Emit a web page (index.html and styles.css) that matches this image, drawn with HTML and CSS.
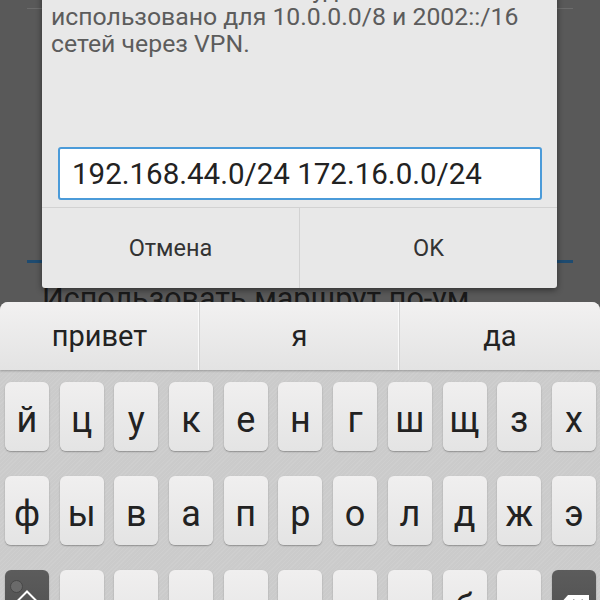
FILE: index.html
```html
<!DOCTYPE html>
<html lang="ru">
<head>
<meta charset="utf-8">
<title>VPN routes</title>
<link rel="stylesheet" href="styles.css">
</head>
<body>
<div class="under">
  <div class="rule"></div>
  <div class="blue"></div>
  <div class="label">Использовать маршрут по-умолчанию</div>
</div>

<div class="dialog">
  <div class="msg">
    <div class="line">"10.0.0.0/8 2002::/16" будет</div>
    <div class="line">использовано для 10.0.0.0/8 и 2002::/16</div>
    <div class="line">сетей через VPN.</div>
  </div>
  <div class="field-wrap">
    <div class="input">192.168.44.0/24 172.16.0.0/24</div>
  </div>
  <div class="buttons">
    <div class="btn">Отмена</div>
    <div class="btn btn-sep">OK</div>
  </div>
</div>

<div class="keyboard">
  <div class="strip">
    <div class="sug">привет</div>
    <div class="sug">я</div>
    <div class="sug sug-last">да</div>
  </div>
  <div class="rows">
    <div class="row">
      <div class="key">й</div><div class="key">ц</div><div class="key">у</div><div class="key">к</div><div class="key">е</div><div class="key">н</div><div class="key">г</div><div class="key">ш</div><div class="key">щ</div><div class="key">з</div><div class="key">х</div>
    </div>
    <div class="row">
      <div class="key">ф</div><div class="key">ы</div><div class="key">в</div><div class="key">а</div><div class="key">п</div><div class="key">р</div><div class="key">о</div><div class="key">л</div><div class="key">д</div><div class="key">ж</div><div class="key">э</div>
    </div>
    <div class="row">
      <div class="key key-dark key-shift">
        <span class="led"></span>
        <svg width="28" height="30" viewBox="0 0 28 30"><polygon points="14,1.5 26,13.5 19,13.5 19,28 9,28 9,13.5 2,13.5" fill="none" stroke="#ffffff" stroke-width="2" stroke-linejoin="miter"/></svg>
      </div>
      <div class="key">я</div><div class="key">ч</div><div class="key">с</div><div class="key">м</div><div class="key">и</div><div class="key">т</div><div class="key">ь</div><div class="key">б</div><div class="key">ю</div>
      <div class="key key-dark key-back">
        <svg width="32" height="22" viewBox="0 0 32 22"><path d="M10 1 H31 V21 H10 L1 11 Z" fill="#ffffff"/><path d="M15 6 L25 16 M25 6 L15 16" stroke="#4e4e4e" stroke-width="2.4"/></svg>
      </div>
    </div>
  </div>
</div>
</body>
</html>
```

FILE: styles.css
```css
html, body {
  margin: 0;
  padding: 0;
}
body {
  width: 600px;
  height: 600px;
  overflow: hidden;
  position: relative;
  background: #595959;
  font-family: Roboto, "Noto Sans", sans-serif;
}

/* dimmed page under the dialog */
.under {
  padding-top: 8px;
}
.rule {
  height: 1px;
  margin: 0 27px;
  background: #6c6c6c;
}
.blue {
  height: 3px;
  margin: 251px 27px 0;
  background: #1e4b70;
}
.label {
  margin-top: 18px;
  margin-left: 42px;
  width: 428px;
  overflow: hidden;
  font-size: 30.5px;
  color: #1a1a1a;
  white-space: nowrap;
}

/* dialog */
.dialog {
  position: absolute;
  left: 42px;
  top: -24px;
  width: 515px;
  background: #e8e8e8;
  border-radius: 0 0 3px 3px;
  box-shadow: 0 2px 6px rgba(0, 0, 0, 0.45);
}
.msg {
  padding: 0 9px;
  font-size: 24.8px;
  line-height: 27px;
  color: #5c5c5c;
  white-space: nowrap;
}
.field-wrap {
  padding: 90px 15px 7px 16px;
}
.input {
  box-sizing: border-box;
  height: 53px;
  border: 2px solid #4b9bd9;
  border-radius: 3px;
  background: #ffffff;
  display: flex;
  align-items: center;
  padding-left: 12px;
  font-size: 29.5px;
  color: #222222;
  white-space: nowrap;
}
.buttons {
  display: flex;
  height: 80px;
  border-top: 1px solid #d2d2d2;
}
.btn {
  flex: 1;
  display: flex;
  align-items: center;
  justify-content: center;
  font-size: 23.5px;
  color: #333333;
}
.btn-sep {
  border-left: 1px solid #d2d2d2;
}

/* keyboard */
.keyboard {
  position: absolute;
  left: 0;
  top: 302px;
  width: 600px;
  bottom: 0;
  border-radius: 8px 8px 0 0;
  overflow: hidden;
  background-color: #cbcbcb;
  background-image: repeating-linear-gradient(135deg, rgba(255,255,255,0.07) 0 1px, transparent 1px 3px);
}
.strip {
  height: 68px;
  display: grid;
  grid-template-columns: 200px 200px 200px;
  background: linear-gradient(#f2f1f1, #e3e3e3);
  box-shadow: 0 1px 2px rgba(0, 0, 0, 0.25);
  position: relative;
}
.sug {
  display: flex;
  align-items: center;
  justify-content: center;
  font-size: 29px;
  color: #222222;
  border-right: 1px solid #d6d6d6;
  box-shadow: inset -2px 0 0 -1px #fafafa;
}
.sug-last {
  border-right: 0;
  box-shadow: none;
}
.rows {
  padding: 12px 4px 0 5px;
  display: flex;
  flex-direction: column;
  gap: 25px;
}
.row {
  display: flex;
  justify-content: space-between;
  height: 69px;
}
.key {
  width: 44px;
  box-sizing: border-box;
  border-radius: 6px;
  background: linear-gradient(#f0efef, #e4e4e4);
  box-shadow: 0 1px 1.5px rgba(0, 0, 0, 0.3);
  display: flex;
  align-items: center;
  justify-content: center;
  padding-top: 6px;
  font-size: 36px;
  color: #222222;
  position: relative;
}
.key-dark {
  background: linear-gradient(#5c5c5c, #4c4c4c);
  padding-top: 0;
}
.led {
  position: absolute;
  left: 5px;
  top: 10px;
  width: 11px;
  height: 11px;
  border-radius: 50%;
  background: #6a6a6a;
  border: 1px solid #474747;
}
```
